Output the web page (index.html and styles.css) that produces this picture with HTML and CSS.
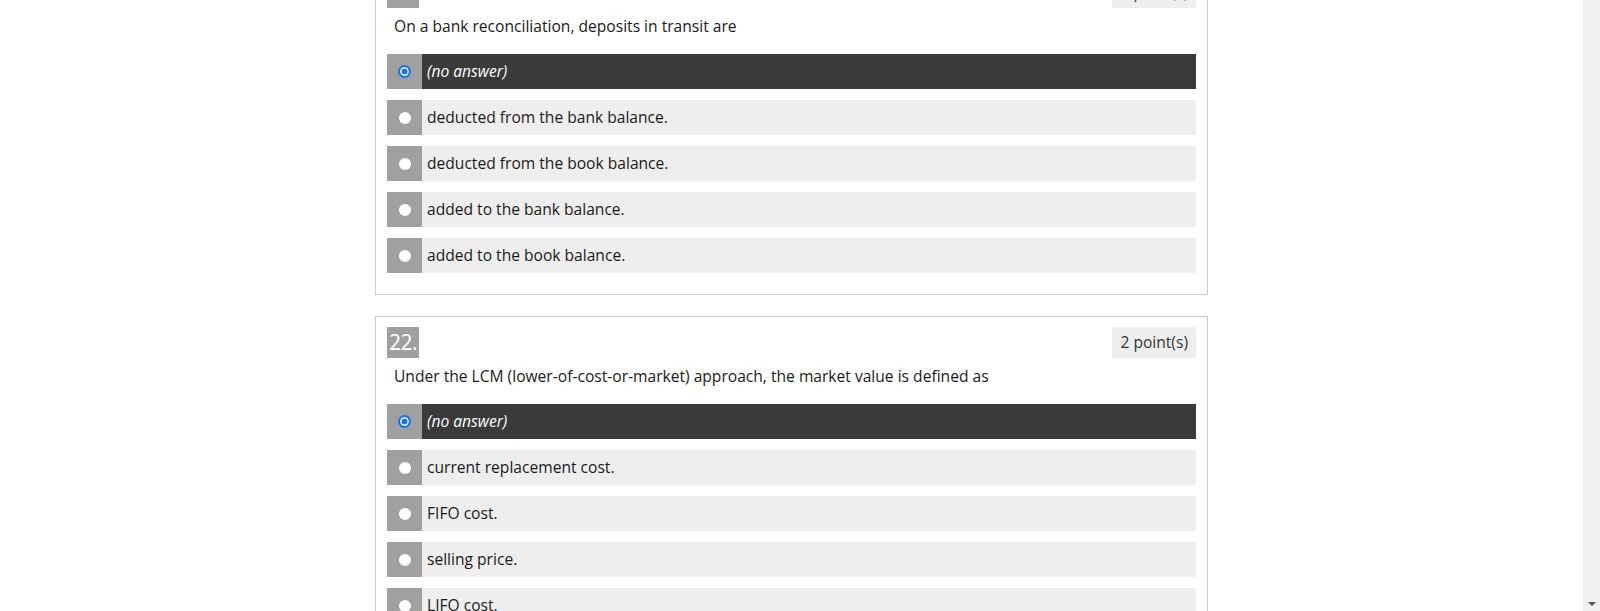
FILE: index.html
```html
<!DOCTYPE html>
<html>
<head>
<meta charset="utf-8">
<link rel="stylesheet" href="styles.css">
</head>
<body>
<div class="page">
  <div class="main">
    <div class="quiz">
      <div class="card">
        <div class="card-head">
          <span class="qnum">21.</span>
          <span class="points">2 point(s)</span>
        </div>
        <p class="question">On a bank reconciliation, deposits in transit are</p>
        <div class="opt selected"><span class="rcell"><span class="radio on"></span></span><span class="label">(no answer)</span></div>
        <div class="opt"><span class="rcell"><span class="radio"></span></span><span class="label">deducted from the bank balance.</span></div>
        <div class="opt"><span class="rcell"><span class="radio"></span></span><span class="label">deducted from the book balance.</span></div>
        <div class="opt"><span class="rcell"><span class="radio"></span></span><span class="label">added to the bank balance.</span></div>
        <div class="opt"><span class="rcell"><span class="radio"></span></span><span class="label">added to the book balance.</span></div>
      </div>
      <div class="card">
        <div class="card-head">
          <span class="qnum">22.</span>
          <span class="points">2 point(s)</span>
        </div>
        <p class="question">Under the LCM (lower-of-cost-or-market) approach, the market value is defined as</p>
        <div class="opt selected"><span class="rcell"><span class="radio on"></span></span><span class="label">(no answer)</span></div>
        <div class="opt"><span class="rcell"><span class="radio"></span></span><span class="label">current replacement cost.</span></div>
        <div class="opt"><span class="rcell"><span class="radio"></span></span><span class="label">FIFO cost.</span></div>
        <div class="opt"><span class="rcell"><span class="radio"></span></span><span class="label">selling price.</span></div>
        <div class="opt"><span class="rcell"><span class="radio"></span></span><span class="label">LIFO cost.</span></div>
      </div>
    </div>
  </div>
  <div class="scrollbar">
    <span class="arrow"></span>
  </div>
</div>
</body>
</html>
```

FILE: styles.css
```css
html, body {
  margin: 0;
  padding: 0;
  height: 611px;
  overflow: hidden;
  background: #ffffff;
  font-family: "Open Sans", "Noto Sans", sans-serif;
  color: #1a1a1a;
}

.page {
  display: flex;
  height: 611px;
}

.main {
  flex: 1;
  overflow: hidden;
}

.quiz {
  width: 833px;
  margin: -34px auto 0;
  display: flex;
  flex-direction: column;
  gap: 21px;
}

.card {
  border: 1px solid #cccccc;
  padding: 10px 11px 10px 11px;
  background: #ffffff;
}

.card-head {
  display: flex;
  justify-content: space-between;
  align-items: flex-start;
  height: 31px;
}

.qnum {
  height: 31px;
  line-height: 31px;
  padding: 0 2px;
  min-width: 27px;
  background: #a0a0a0;
  color: #ffffff;
  font-size: 21px;
  letter-spacing: -0.5px;
}

.points {
  height: 31px;
  line-height: 31px;
  padding: 0 8px;
  background: #eeeeee;
  color: #333333;
  font-size: 15.6px;
}

.question {
  margin: 7px 0 17px;
  padding-left: 7px;
  line-height: 22px;
  font-size: 15.6px;
  color: #1a1a1a;
}

.opt {
  display: flex;
  height: 35px;
  margin-bottom: 11px;
  background: #eeeeee;
}

.opt.selected {
  background: #3a3a3a;
}

.rcell {
  width: 35px;
  flex: none;
  background: #a0a0a0;
  display: flex;
  align-items: center;
  justify-content: center;
}

.radio {
  width: 12px;
  height: 12px;
  border-radius: 50%;
  background: #ffffff;
  box-sizing: border-box;
}

.radio.on {
  width: 13px;
  height: 13px;
  border: 2px solid #1a73e8;
  background: #1a73e8;
  box-shadow: inset 0 0 0 1.5px #ffffff;
}

.label {
  display: flex;
  align-items: center;
  padding-left: 5px;
  padding-bottom: 2px;
  font-size: 15.6px;
  color: #1a1a1a;
}

.opt.selected .label {
  color: #ffffff;
  font-style: italic;
}

.scrollbar {
  width: 17px;
  flex: none;
  background: #f0f0f0;
  display: flex;
  flex-direction: column;
  justify-content: flex-end;
  align-items: center;
}

.arrow {
  width: 0;
  height: 0;
  border-left: 4px solid transparent;
  border-right: 4px solid transparent;
  border-top: 4px solid #505050;
  margin-bottom: 5px;
}
```
